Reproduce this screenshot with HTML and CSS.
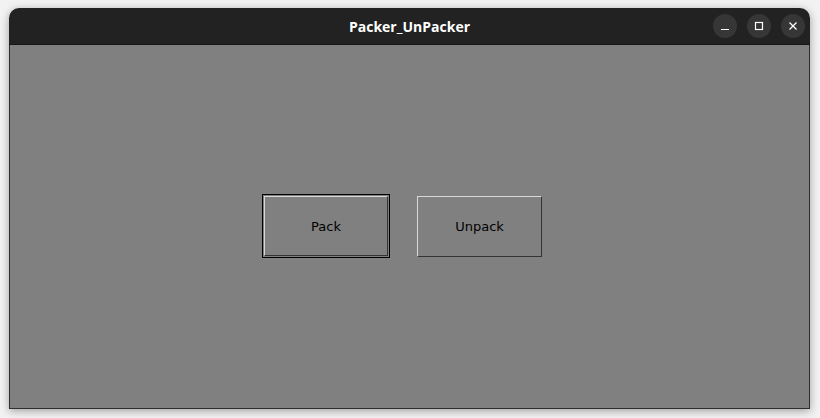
FILE: index.html
```html
<!DOCTYPE html>
<html>
<head>
<meta charset="utf-8">
<link rel="stylesheet" href="styles.css">
</head>
<body>
<div class="window">
  <div class="titlebar">
    <div class="title">Packer_UnPacker</div>
    <div class="controls">
      <span class="ctl"><svg width="10" height="10" viewBox="0 0 10 10"><path d="M1 8.5H9" stroke="#fff" stroke-width="1.2"/></svg></span>
      <span class="ctl"><svg width="10" height="10" viewBox="0 0 10 10"><rect x="1.5" y="1.5" width="7" height="7" fill="none" stroke="#fff" stroke-width="1.2"/></svg></span>
      <span class="ctl"><svg width="10" height="10" viewBox="0 0 10 10"><path d="M1.5 1.5L8.5 8.5M8.5 1.5L1.5 8.5" stroke="#fff" stroke-width="1.3"/></svg></span>
    </div>
  </div>
  <div class="content">
    <div class="buttons">
      <div class="focus"><button class="btn pack">Pack</button></div>
      <button class="btn unpack">Unpack</button>
    </div>
  </div>
</div>
</body>
</html>
```
FILE: styles.css
```css
html, body {
  margin: 0;
  padding: 0;
}
body {
  width: 820px;
  height: 418px;
  background: #f2f2f2;
  overflow: hidden;
  font-family: "DejaVu Sans", sans-serif;
}
.window {
  margin: 8px 0 0 9px;
  width: 801px;
  height: 401px;
  border-radius: 10px 10px 0 0;
  overflow: hidden;
  box-shadow: 0 2px 9px rgba(0,0,0,0.35);
  display: flex;
  flex-direction: column;
}
.titlebar {
  height: 36px;
  background: #222222;
  border-bottom: 1px solid #161616;
  display: flex;
  align-items: center;
  justify-content: center;
  position: relative;
}
.title {
  color: #ffffff;
  font-family: "Open Sans", "DejaVu Sans", sans-serif;
  font-weight: 700;
  font-size: 14px;
  letter-spacing: 0;
}
.controls {
  position: absolute;
  right: 5px;
  top: 6px;
  display: flex;
  gap: 10px;
}
.ctl {
  width: 24px;
  height: 24px;
  border-radius: 50%;
  background: #363636;
  display: flex;
  align-items: center;
  justify-content: center;
}
.content {
  flex: 1;
  background: #808080;
  border: 1px solid #2e2e2e;
  border-top: none;
  display: flex;
  align-items: center;
  padding-left: 252px;
}
.buttons {
  display: flex;
  align-items: center;
  gap: 27px;
  margin-top: -1px;
}
.focus {
  border: 1px solid #000;
  padding: 1px;
  display: flex;
}
.btn {
  margin: 0;
  font-family: "DejaVu Sans", sans-serif;
  font-size: 13px;
  color: #000;
  background: #808080;
  border: 1px solid;
  border-color: #d8d8d8 #333 #333 #d8d8d8;
  padding: 0;
}
.pack {
  width: 124px;
  height: 60px;
}
.unpack {
  width: 125px;
  height: 61px;
}
```
